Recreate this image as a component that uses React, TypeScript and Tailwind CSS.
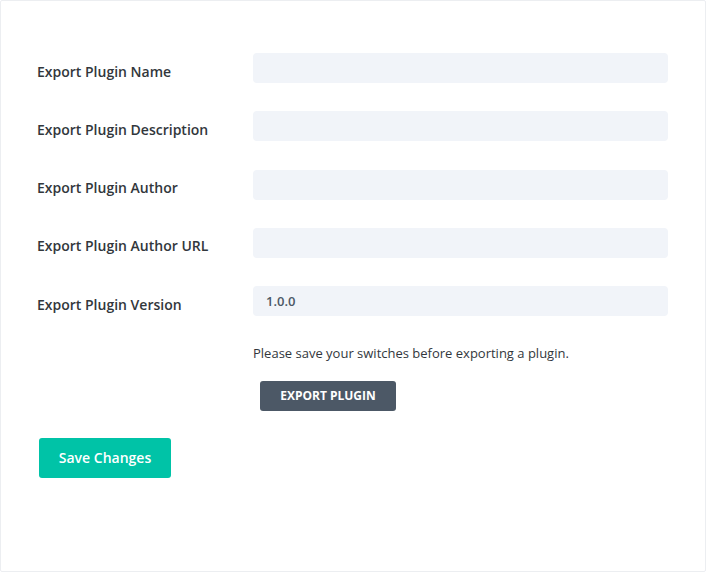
import React from 'react'

const FIELDS = [
  { label: 'Export Plugin Name', value: '' },
  { label: 'Export Plugin Description', value: '' },
  { label: 'Export Plugin Author', value: '' },
  { label: 'Export Plugin Author URL', value: '' },
  { label: 'Export Plugin Version', value: '1.0.0' },
]

export default function App() {
  return (
    <div
      className="w-[706px] h-[572px] bg-white border border-[#eceef1] rounded-[2px]"
      style={{ fontFamily: '"Open Sans", "Noto Sans", sans-serif' }}
    >
      <div className="pl-[36px] pt-[52px]">
        <div className="flex flex-col gap-[28.25px]">
          {FIELDS.map(f => (
            <div key={f.label} className="flex items-center">
              <label className="w-[216px] shrink-0 pt-[6px] text-[14px] font-semibold text-[#32373c]">
                {f.label}
              </label>
              <input
                type="text"
                defaultValue={f.value}
                className="w-[415px] h-[30px] rounded-[4px] bg-[#f1f4f9] px-[13px] text-[13px] font-semibold text-[#4c5866] outline-none"
              />
            </div>
          ))}
        </div>

        <div className="ml-[216px] mt-[28px]">
          <p className="text-[13px] text-[#32373c]">Please save your switches before exporting a plugin.</p>
          <button
            type="button"
            className="mt-[17px] ml-[7px] w-[136px] h-[30px] rounded-[3px] bg-[#4c5866] text-white text-[12px] font-bold uppercase"
          >
            Export Plugin
          </button>
        </div>

        <button
          type="button"
          className="mt-[27px] ml-[2px] w-[132px] h-[40px] rounded-[3px] bg-[#00c3a7] text-white text-[14px] font-semibold"
        >
          Save Changes
        </button>
      </div>
    </div>
  )
}
